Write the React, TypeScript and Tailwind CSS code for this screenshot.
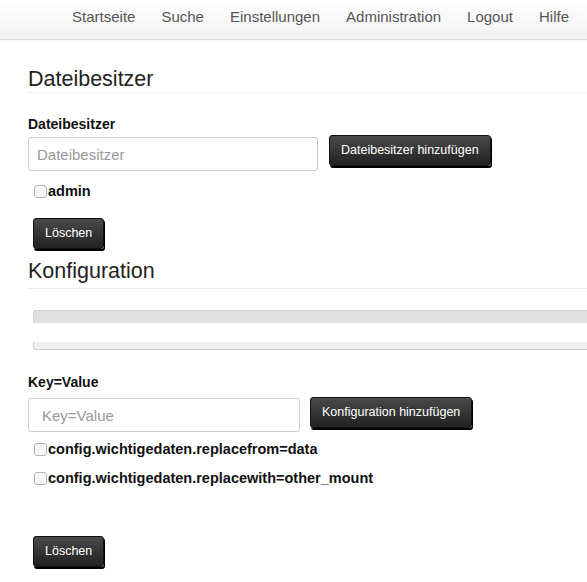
import React from 'react';

const navItems = ['Startseite', 'Suche', 'Einstellungen', 'Administration', 'Logout', 'Hilfe'];

const DarkButton: React.FC<{ label: string; className?: string }> = ({ label, className = '' }) => (
  <button
    className={`h-[31px] px-[11px] rounded-[3px] border border-[#111] bg-gradient-to-b from-[#4a4a4a] to-[#222] text-white text-[12.5px] shadow-[1px_2px_0_#000] ${className}`}
  >
    {label}
  </button>
);

const CheckRow: React.FC<{ label: string; className?: string }> = ({ label, className = '' }) => (
  <label className={`flex items-center ${className}`}>
    <input
      type="checkbox"
      className="appearance-none w-[13px] h-[13px] border border-[#b5b5b5] rounded-[3px] bg-[#f6f6f6] mr-[1px]"
    />
    <span className="text-[14.5px] font-bold text-[#111] leading-[20px]">{label}</span>
  </label>
);

export default function App() {
  return (
    <div className="w-[587px] h-[582px] overflow-hidden bg-white font-['Liberation_Sans',Arial,sans-serif]">
      {/* Navbar */}
      <nav className="h-[40px] bg-gradient-to-b from-white to-[#f2f2f2] border-b border-[#dcdcdc] shadow-[0_1px_3px_rgba(0,0,0,0.06)] flex justify-end pr-[5px]">
        <ul className="flex items-start">
          {navItems.map(item => (
            <li key={item} className="px-[13px] pt-[7px] text-[15px] leading-[20px] text-[#555]">
              {item}
            </li>
          ))}
        </ul>
      </nav>

      <div className="pl-[28px]">
        {/* Dateibesitzer */}
        <h2 className="mt-[26px] text-[21.5px] leading-[26px] text-[#222] border-b border-[#eee] mr-[-10px]">
          Dateibesitzer
        </h2>
        <div className="mt-[21px] text-[14px] font-bold leading-[20px] text-[#111]">Dateibesitzer</div>
        <div className="mt-[3px] flex items-start">
          <input
            placeholder="Dateibesitzer"
            className="w-[290px] h-[34px] border border-[#ccc] rounded-[3px] px-[8px] text-[15px] placeholder:text-[#999] outline-none"
          />
          <DarkButton label="Dateibesitzer hinzufügen" className="ml-[11px] mt-[-2px]" />
        </div>
        <CheckRow label="admin" className="ml-[6px] mt-[10px]" />
        <DarkButton label="Löschen" className="ml-[5px] mt-[17px]" />

        {/* Konfiguration */}
        <h2 className="mt-[9px] text-[21.5px] leading-[26px] text-[#222] pb-[4px] border-b border-[#eee] mr-[-10px]">
          Konfiguration
        </h2>
        <div className="ml-[5px] mr-[-20px] mt-[21px]">
          <div className="h-[13px] bg-[#e0e0e0] border-t border-l border-[#cfcfcf] rounded-tl-[3px]"></div>
          <div className="h-[19px] bg-white"></div>
          <div className="h-[8px] bg-[#f0f0f0] border-b border-l border-[#cfcfcf] rounded-bl-[3px]"></div>
        </div>

        <div className="mt-[22px] text-[14px] font-bold leading-[20px] text-[#111]">Key=Value</div>
        <div className="mt-[6px] flex items-start">
          <input
            placeholder="Key=Value"
            className="w-[272px] h-[34px] border border-[#ccc] rounded-[3px] px-[13px] text-[15px] placeholder:text-[#999] outline-none"
          />
          <DarkButton label="Konfiguration hinzufügen" className="ml-[10px] mt-[-1px]" />
        </div>
        <CheckRow label="config.wichtigedaten.replacefrom=data" className="ml-[6px] mt-[7px]" />
        <CheckRow label="config.wichtigedaten.replacewith=other_mount" className="ml-[6px] mt-[9px]" />
        <DarkButton label="Löschen" className="ml-[5px] mt-[48px]" />
      </div>
    </div>
  );
}
